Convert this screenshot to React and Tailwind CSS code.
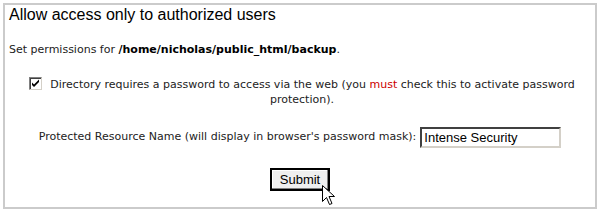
import React from 'react';

function ClassicCheckbox() {
  return (
    <span className="inline-block align-[-2px] mr-[8px] w-[13px] h-[13px] bg-white border border-t-[#808080] border-l-[#808080] border-b-[#d4d0c8] border-r-[#d4d0c8] shadow-[inset_1px_1px_0_#404040]">
      <svg width="11" height="11" viewBox="0 0 11 11" className="block">
        <path d="M2 4.5 L4 6.5 L9 1.5 L9 4 L4 9 L2 7 Z" fill="#000" />
      </svg>
    </span>
  );
}

export default function App() {
  return (
    <div className="w-[600px] h-[215px] bg-white relative overflow-hidden">
      <div className="absolute inset-0 pt-[3px] pl-[3px] pr-[3px]">
        <div className="h-[206px] border-2 border-[#cbcbcb] pl-[4px] pr-[4px]">
          <h2 className="pt-[1px] text-[16px] leading-[18px] text-black font-['Liberation_Sans',Arial,sans-serif]">
            Allow access only to authorized users
          </h2>

          <p className="mt-[19px] text-[11px] leading-[14px] text-[#222] font-['DejaVu_Sans',Verdana,sans-serif]">
            Set permissions for <b className="font-bold text-black">/home/nicholas/public_html/backup</b>.
          </p>

          <div className="mt-[20px] pl-[4px] text-center text-[11px] leading-[15px] text-[#222] font-['DejaVu_Sans',Verdana,sans-serif]">
            <ClassicCheckbox />
            Directory requires a password to access via the web (you{' '}
            <span className="text-[#cc0000]">must</span> check this to activate password
            <br />
            protection).
          </div>

          <div className="mt-[20px] flex items-center justify-center gap-[4px] text-[11px] text-[#222] font-['DejaVu_Sans',Verdana,sans-serif]">
            <span>Protected Resource Name (will display in browser's password mask):</span>
            <input
              type="text"
              defaultValue="Intense Security"
              className="w-[141px] h-[21px] px-[2px] text-[13px] text-black bg-white border-2 border-t-[#404040] border-l-[#404040] border-b-[#d4d0c8] border-r-[#d4d0c8] outline-none font-['Liberation_Sans',Arial,sans-serif]"
            />
          </div>

          <div className="mt-[20px] flex justify-center">
            <button className="w-[60px] h-[23px] bg-[#efefef] border-2 border-black text-[13px] text-black shadow-[inset_-1px_-1px_0_#808080,inset_1px_1px_0_#ffffff] font-['Liberation_Sans',Arial,sans-serif]">
              Submit
            </button>
          </div>
        </div>
      </div>

      <svg
        className="absolute left-[322px] top-[185px]"
        width="14"
        height="22"
        viewBox="0 0 14 22"
      >
        <path
          d="M0.5 0.5 L0.5 16.5 L4.5 12.5 L7.5 19.5 L10 18.5 L7 11.5 L12.5 11.5 Z"
          fill="#ffffff"
          stroke="#000000"
          strokeWidth="1"
        />
      </svg>
    </div>
  );
}
